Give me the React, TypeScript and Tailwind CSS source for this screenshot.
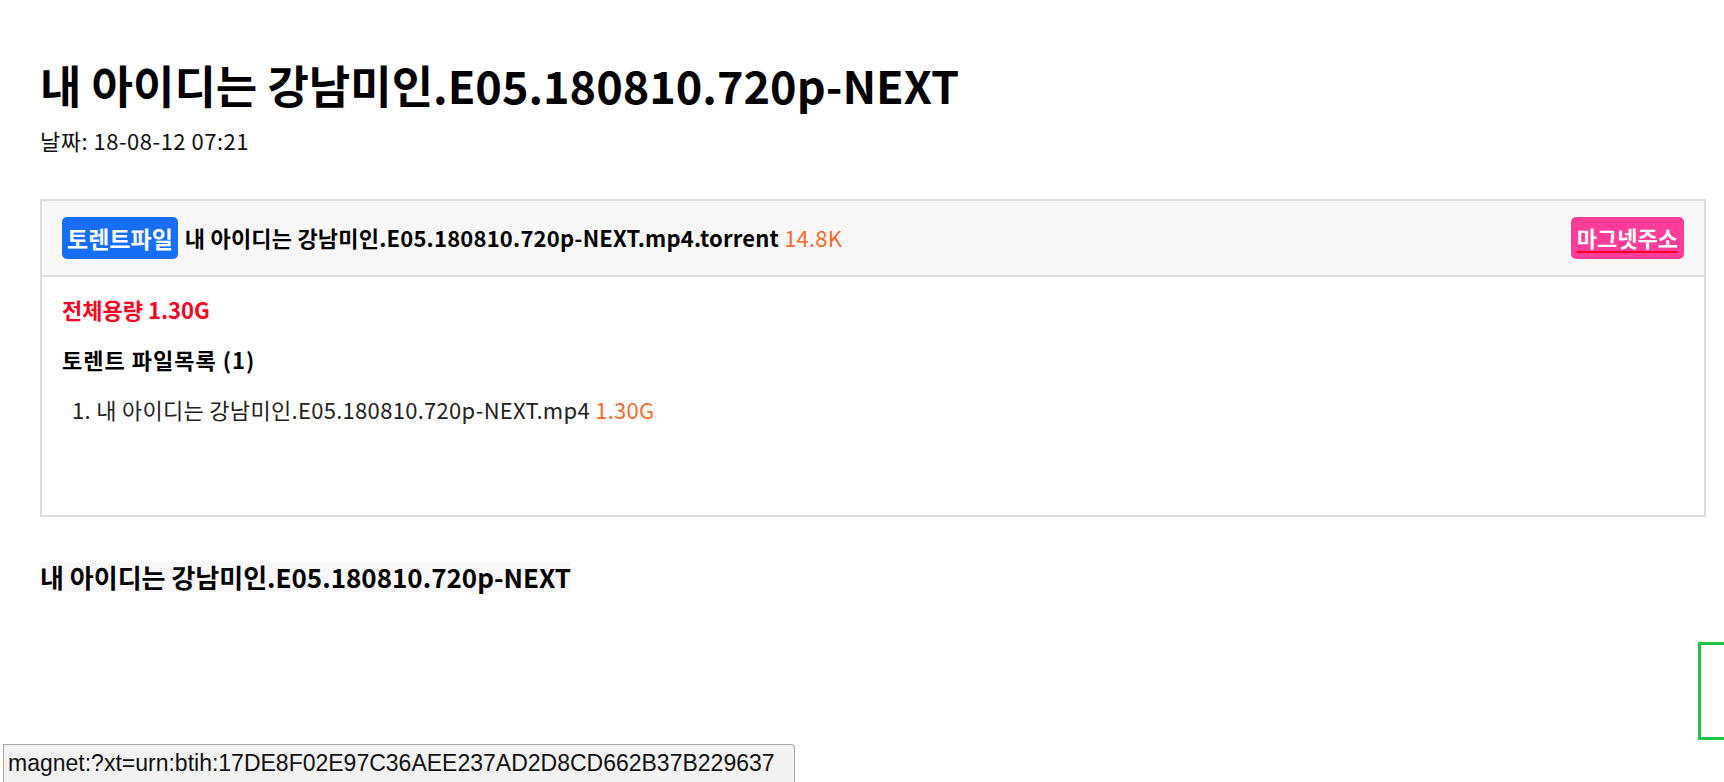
import React from "react";

const font = { fontFamily: '"Noto Sans CJK KR", "Noto Sans", sans-serif' };

interface TorrentFile {
  name: string;
  size: string;
}

const files: TorrentFile[] = [
  { name: "내 아이디는 강남미인.E05.180810.720p-NEXT.mp4", size: "1.30G" },
];

const App: React.FC = () => {
  return (
    <div className="relative min-h-[782px] bg-white text-black" style={font}>
      <div className="pl-[40px] pr-[18px] pt-[58px]">
        {/* Title */}
        <h1 className="text-[45px] font-bold leading-[1.2]">
          내 아이디는 강남미인.E05.180810.720p-NEXT
        </h1>
        <p className="mt-[13px] text-[22px] leading-[1.4] tracking-[0.5px] text-[#111]">날짜: 18-08-12 07:21</p>

        {/* Torrent box */}
        <div className="mt-[43px] border-2 border-[#dddddd]">
          <div className="flex h-[76px] items-center justify-between border-b-2 border-[#dddddd] bg-[#f7f7f7] px-[20px]">
            <div className="flex items-center gap-[7px]">
              <span className="flex h-[42px] items-center rounded-[5px] bg-[#176ef6] px-[5px] text-[23px] font-bold text-white">
                토렌트파일
              </span>
              <span className="text-[22px] font-bold tracking-[0.2px]">
                내 아이디는 강남미인.E05.180810.720p-NEXT.mp4.torrent{" "}
                <span className="font-normal text-[#ff6a2f]">14.8K</span>
              </span>
            </div>
            <span className="flex h-[42px] items-center rounded-[5px] bg-[#ff3c98] px-[6px] text-[22px] font-bold text-white underline decoration-[#ff0022] decoration-2 underline-offset-[4px]">
              마그넷주소
            </span>
          </div>

          <div className="h-[238px] px-[20px] pt-[17px]">
            <p className="text-[22px] font-bold leading-[1.4] text-[#ff0022]">전체용량 1.30G</p>
            <p className="mt-[20px] text-[22px] font-bold leading-[1.3] tracking-[1px]">
              토렌트 파일목록 ({files.length})
            </p>
            <ol className="mt-[21px] pl-[10px] text-[22px] leading-[1.4] tracking-[0.3px] text-[#222]">
              {files.map((f, i) => (
                <li key={f.name}>
                  {i + 1}. {f.name} <span className="text-[#ff6a2f]">{f.size}</span>
                </li>
              ))}
            </ol>
          </div>
        </div>

        {/* Description */}
        <div className="mt-[45px]">
          <span className="inline-block h-[30px] bg-[#f7f7f7] text-[26px] font-bold leading-[30px]">
            내 아이디는 강남미인.E05.180810.720p-NEXT
          </span>
        </div>
      </div>

      {/* floating widget, cut off at the right edge */}
      <div className="absolute left-[1698px] top-[642px] h-[98px] w-[40px] border-[3px] border-[#22c543]" />

      {/* browser status bar */}
      <div
        className="absolute bottom-0 left-[3px] flex h-[38px] w-[792px] items-center rounded-tr-[4px] border border-b-0 border-[#a8a8a8] bg-[#f2f2f2] px-[4px] text-[23px] text-[#111]"
        style={{ fontFamily: '"Liberation Sans", Arial, sans-serif' }}
      >
        magnet:?xt=urn:btih:17DE8F02E97C36AEE237AD2D8CD662B37B229637
      </div>
    </div>
  );
};

export default App;
